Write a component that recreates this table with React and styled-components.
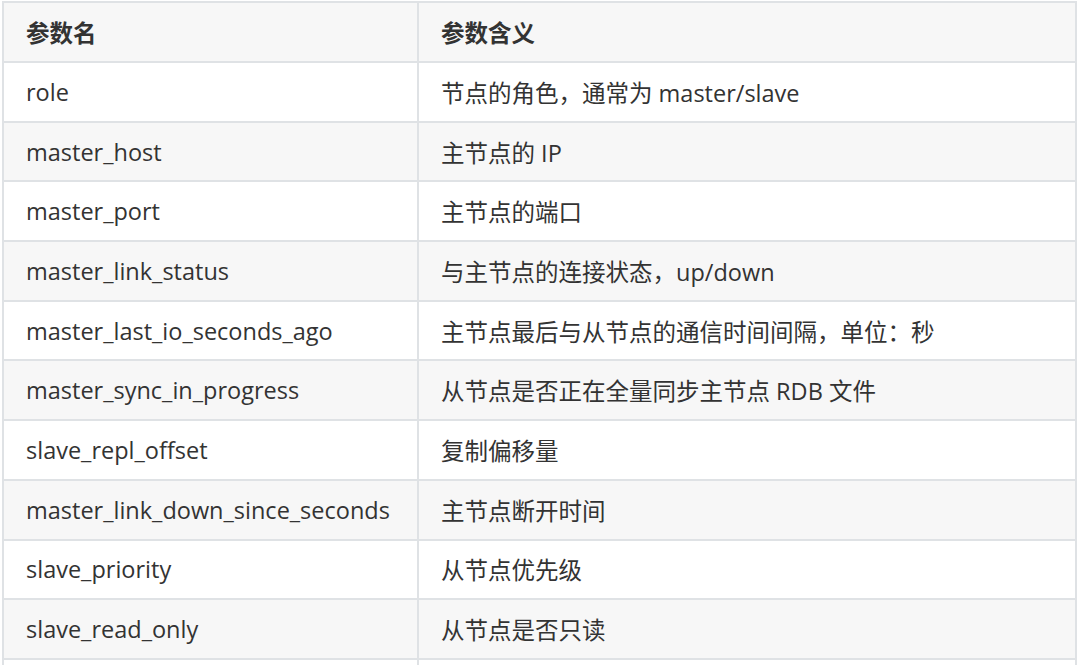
import React from 'react'
import styled, { createGlobalStyle } from 'styled-components'

const GlobalStyle = createGlobalStyle`
  html, body {
    margin: 0;
    padding: 0;
    background: #ffffff;
    height: 665px;
    overflow: hidden;
  }
`

const Page = styled.div`
  padding: 1px 0 0 2px;
  font-family: "Open Sans", "Noto Sans CJK SC", sans-serif;
  color: #333333;
`

const Table = styled.table`
  width: 1075px;
  border-collapse: collapse;
  table-layout: fixed;
  font-size: 23.5px;
`

const HeadCell = styled.th`
  box-sizing: border-box;
  height: 60px;
  padding: 0 22px;
  border: 2px solid #dfe2e5;
  background: #f7f7f7;
  text-align: left;
  font-weight: 700;
  width: ${p => p.$w || 'auto'};
`

const Row = styled.tr`
  background: ${p => (p.$alt ? '#f7f7f7' : '#ffffff')};
`

const Cell = styled.td`
  height: 57.7px;
  padding: 0 22px;
  border: 2px solid #dfe2e5;
  white-space: nowrap;
`

const rows = [
  ['role', '节点的角色，通常为 master/slave'],
  ['master_host', '主节点的 IP'],
  ['master_port', '主节点的端口'],
  ['master_link_status', '与主节点的连接状态，up/down'],
  ['master_last_io_seconds_ago', '主节点最后与从节点的通信时间间隔，单位：秒'],
  ['master_sync_in_progress', '从节点是否正在全量同步主节点 RDB 文件'],
  ['slave_repl_offset', '复制偏移量'],
  ['master_link_down_since_seconds', '主节点断开时间'],
  ['slave_priority', '从节点优先级'],
  ['slave_read_only', '从节点是否只读'],
  ['', ''],
]

export default function App() {
  return (
    <>
      <GlobalStyle />
      <Page>
        <Table>
          <thead>
            <tr>
              <HeadCell $w="415px">参数名</HeadCell>
              <HeadCell>参数含义</HeadCell>
            </tr>
          </thead>
          <tbody>
            {rows.map(([name, desc], i) => (
              <Row key={i} $alt={i % 2 === 1}>
                <Cell>{name}</Cell>
                <Cell>{desc}</Cell>
              </Row>
            ))}
          </tbody>
        </Table>
      </Page>
    </>
  )
}
